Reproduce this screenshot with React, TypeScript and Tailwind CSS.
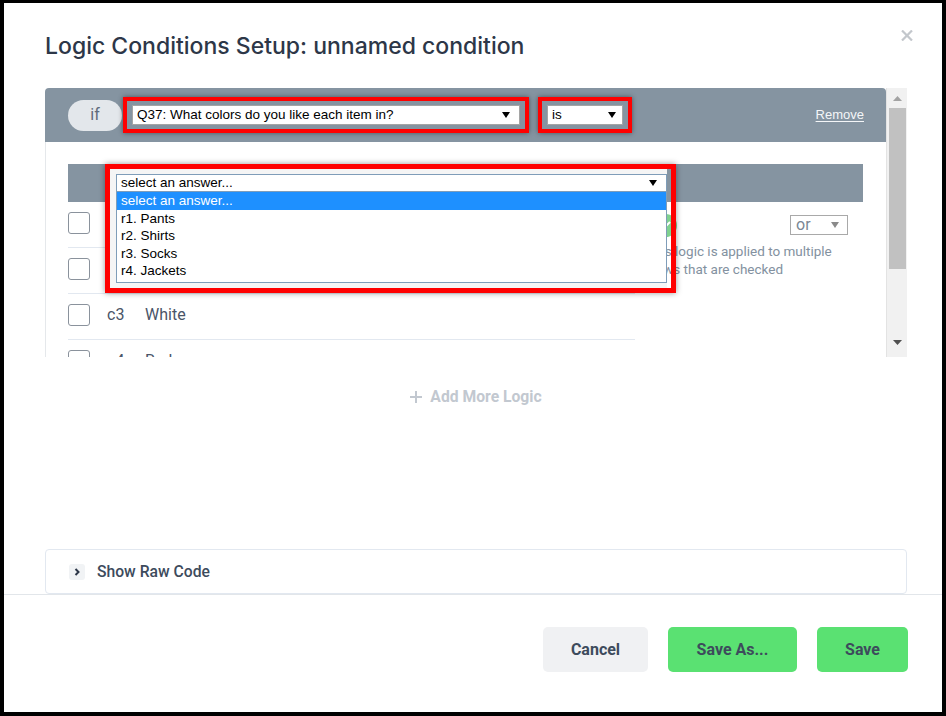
const rows = [
  { code: 'c1', label: 'Black' },
  { code: 'c2', label: 'Blue' },
  { code: 'c3', label: 'White' },
  { code: 'c4', label: 'Red' },
];

const answers = ['r1. Pants', 'r2. Shirts', 'r3. Socks', 'r4. Jackets'];

const Caret = ({ color = '#000' }: { color?: string }) => (
  <svg width="8" height="6" viewBox="0 0 8 6">
    <polygon points="0,0 8,0 4,6" fill={color} />
  </svg>
);

export default function App() {
  return (
    <div className="w-[946px] h-[716px] bg-white border-[4px] border-t-[3px] border-black flex flex-col font-['Roboto',sans-serif] overflow-hidden">
      {/* header */}
      <div className="flex items-start justify-between pl-[41px] pr-[29px] pt-[29px]">
        <h1 className="font-['Inter',sans-serif] text-[23px] leading-[28px] font-medium text-[#2d3748]">
          Logic Conditions Setup: unnamed condition
        </h1>
        <button className="mt-[-2px]">
          <svg width="12" height="11" viewBox="0 0 12 11">
            <path d="M1 0.5 L11 10.5 M11 0.5 L1 10.5" stroke="#c3c7cc" strokeWidth="2.2" />
          </svg>
        </button>
      </div>

      {/* scroll area */}
      <div className="mt-[28px] ml-[41px] mr-[35px] h-[269px] flex">
        <div className="relative flex-1 overflow-hidden">
          <div className="h-[54px] bg-[#8594a1] rounded-t-[4px] flex items-center pl-[23px] pr-[22px]">
            <div className="w-[54px] h-[31px] rounded-full bg-[#e3e7eb] flex items-center justify-center text-[16px] text-[#5f6b7a]">
              if
            </div>
            <div className="ml-[1px] w-[406px] h-[36px] border-4 border-[#ff0000] px-[5px] py-[4px] shadow-[0_0_5px_rgba(0,0,0,0.45)]">
              <div className="h-[20px] bg-white border border-[#a5a5a5] flex items-center justify-between pl-[4px] pr-[9px] font-['Liberation_Sans',Arial,sans-serif] text-[13.5px] text-black">
                <span>Q37: What colors do you like each item in?</span>
                <Caret />
              </div>
            </div>
            <div className="ml-[9px] w-[94px] h-[36px] border-4 border-[#ff0000] px-[5px] py-[4px] shadow-[0_0_5px_rgba(0,0,0,0.45)]">
              <div className="h-[20px] bg-white border border-[#a5a5a5] flex items-center justify-between pl-[4px] pr-[6px] font-['Liberation_Sans',Arial,sans-serif] text-[13.5px] text-black">
                <span>is</span>
                <Caret />
              </div>
            </div>
            <a className="ml-auto font-['Liberation_Sans',Arial,sans-serif] text-[13px] text-[#f4f6f8] underline underline-offset-2">
              Remove
            </a>
          </div>

          <div className="border-l border-[#e5e8eb] pt-[22px] pl-[22px] pr-[23px]">
            <div className="h-[38px] bg-[#8594a1]" />
            <div className="flex">
              <div className="w-[567px]">
                {rows.map((r) => (
                  <div key={r.code} className="flex items-center border-b border-[#e2e8f0] pt-[10px] pb-[13px]">
                    <div className="w-[22px] h-[22px] rounded-[3px] border border-[#8a929c] bg-white" />
                    <span className="ml-[17px] w-[38px] text-[16px] leading-[22px] text-[#4a5568]">{r.code}</span>
                    <span className="text-[16px] leading-[22px] text-[#4a5568]">{r.label}</span>
                  </div>
                ))}
              </div>
              <div className="flex-1 pt-[12px] pr-[15px]">
                <div className="flex items-start justify-between h-[24px]">
                  <div className="ml-[19px] w-[23px] h-[23px] rounded-full bg-[#7fd18f] flex items-center justify-center">
                    <svg width="12" height="12" viewBox="0 0 12 12">
                      <path d="M2 10 L10 2" stroke="#fff" strokeWidth="2" />
                    </svg>
                  </div>
                  <div className="mt-[1px] w-[58px] h-[20px] border border-[#a9a9a9] bg-white flex items-center justify-between pl-[5px] pr-[8px] text-[16px] text-[#7b8794]">
                    <span className="leading-[18px]">or</span>
                    <Caret color="#8a8a8a" />
                  </div>
                </div>
                <div className="mt-[4px] text-[13.5px] leading-[18px] text-[#8391a0] whitespace-nowrap">
                  <p className="pl-[11px]">This logic is applied to multiple</p>
                  <p className="pl-[16px]">rows that are checked</p>
                </div>
              </div>
            </div>
          </div>

          {/* open native select popup, outlined in red */}
          <div className="absolute left-[60px] top-[76px] w-[571px] h-[129px] border-[5px] border-[#ff0000] pr-[4px] shadow-[0_0_6px_rgba(0,0,0,0.4)] font-['Liberation_Sans',Arial,sans-serif] text-[13.5px]">
            <div className="h-full bg-[#f5f5f5] pl-[6px] pt-[5px]">
              <div className="h-[18px] bg-white border border-[#7f9db9] flex items-center justify-between pl-[4px] pr-[9px] text-black">
                <span className="leading-[16px]">select an answer...</span>
                <Caret />
              </div>
              <div className="bg-white border-x border-b border-[#7f9db9] pb-[2px]">
                <div className="h-[17.5px] leading-[17.5px] bg-[#1e90ff] text-white pl-[4px]">select an answer...</div>
                {answers.map((a) => (
                  <div key={a} className="h-[17.5px] leading-[17.5px] text-black pl-[4px]">
                    {a}
                  </div>
                ))}
              </div>
            </div>
          </div>
        </div>

        {/* scrollbar */}
        <div className="w-[21px] bg-[#f1f1f1] border-l border-[#e3e3e3] flex flex-col">
          <div className="h-[20px] flex items-center justify-center">
            <svg width="9" height="5" viewBox="0 0 9 5">
              <polygon points="0,5 9,5 4.5,0" fill="#a3a3a3" />
            </svg>
          </div>
          <div className="ml-[2px] w-[17px] h-[161px] bg-[#c1c1c1]" />
          <div className="flex-1" />
          <div className="h-[18px] flex items-start justify-center pt-[1px]">
            <svg width="9" height="5" viewBox="0 0 9 5">
              <polygon points="0,0 9,0 4.5,5" fill="#505050" />
            </svg>
          </div>
        </div>
      </div>

      {/* add more logic */}
      <div className="mt-[28px] ml-[41px] mr-[35px] flex items-center justify-center gap-[8px] text-[15.7px] leading-[24px] font-bold text-[#c2c8d0]">
        <svg width="12" height="12" viewBox="0 0 12 12">
          <path d="M6 0 V12 M0 6 H12" stroke="#c2c8d0" strokeWidth="2" />
        </svg>
        <span>Add More Logic</span>
      </div>

      <div className="flex-1" />

      {/* raw code */}
      <div className="ml-[41px] mr-[35px] h-[45px] border border-[#e2e8f0] rounded-[4px] flex items-center pl-[23px]">
        <div className="w-[16px] h-[16px] bg-[#f1f3f5] rounded-[3px] flex items-center justify-center">
          <svg width="8" height="8" viewBox="0 0 8 8">
            <path d="M2.5 1 L5.5 4 L2.5 7" stroke="#2d3748" strokeWidth="2" fill="none" />
          </svg>
        </div>
        <span className="ml-[12px] text-[15.7px] font-medium text-[#3d4b5c]">Show Raw Code</span>
      </div>

      {/* footer */}
      <div className="border-t border-[#e2e6ea] pt-[32px] pb-[40px] pr-[34px] flex justify-end gap-[20px]">
        <button className="w-[105px] h-[45px] rounded-[5px] bg-[#f0f1f3] text-[16px] font-bold text-[#3d4b5c]">
          Cancel
        </button>
        <button className="w-[129px] h-[45px] rounded-[5px] bg-[#5ae172] text-[16px] font-bold text-[#3d4b5c]">
          Save As...
        </button>
        <button className="w-[91px] h-[45px] rounded-[5px] bg-[#5ae172] text-[16px] font-bold text-[#3d4b5c]">
          Save
        </button>
      </div>
    </div>
  );
}
